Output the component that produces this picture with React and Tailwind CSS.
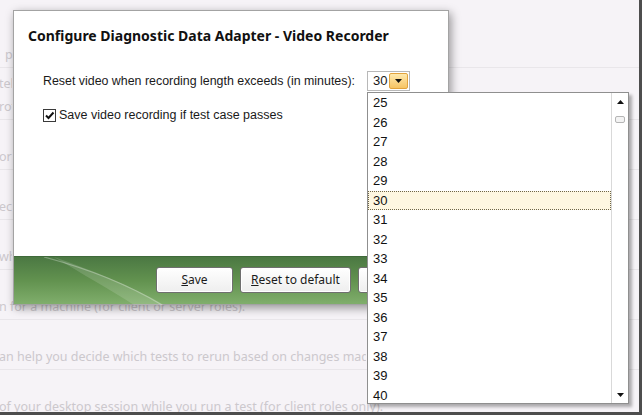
import React from 'react';

const pageRows = [
  { height: 'h-[68px]', lines: ['p'], indent: 'ml-[5px]', clip: 'max-w-[12px]' },
  { height: 'h-[52px]', lines: ['tel', 'rot'], indent: 'ml-[-1px]', clip: 'max-w-[13px]' },
  { height: 'h-[50px]', lines: ['or c'], indent: 'ml-[-1px]', clip: 'max-w-[13px]' },
  { height: 'h-[50px]', lines: ['eci'], indent: 'ml-[-1px]', clip: 'max-w-[13px]' },
  { height: 'h-[50px]', lines: ['wh'], indent: 'ml-[-1px]', clip: 'max-w-[13px]' },
  { height: 'h-[50px]', lines: ['n for a machine (for client or server roles).'], indent: 'ml-[-1px]', clip: '' },
  { height: 'h-[50px]', lines: ['an help you decide which tests to rerun based on changes made t'], indent: 'ml-[-1px]', clip: 'max-w-[367px]' },
  { height: 'h-[50px]', lines: ['of your desktop session while you run a test (for client roles only).'], indent: 'ml-[-1px]', clip: '' },
];

const minutes = Array.from({ length: 16 }, (_, i) => 25 + i);

function Arrow({ up }) {
  return (
    <svg width="7" height="4" viewBox="0 0 7 4">
      <path d={up ? 'M0 4 L3.5 0 L7 4 Z' : 'M0 0 L7 0 L3.5 4 Z'} fill="#111" />
    </svg>
  );
}

function DialogButton({ children, className = '' }) {
  return (
    <button className={`h-[26px] rounded-[3px] border border-[#6f6f6f] bg-gradient-to-b from-white to-[#eeeeee] text-[12px] text-[#1b1b1b] shadow-[inset_0_0_0_1px_#ffffff] ${className}`}>
      {children}
    </button>
  );
}

export default function App() {
  return (
    <div className="w-[644px] h-[417px] bg-white overflow-hidden">
      <div className="relative w-[642px] h-[415px] bg-[#f6f3f7] border-r-[3px] border-b-[3px] border-[#4d4d4d] overflow-hidden font-['Noto_Sans',sans-serif]">
        {/* Faded settings page behind the dialog */}
        <div className="flex flex-col text-[12.5px] text-[#ccc8cd] whitespace-nowrap">
          {pageRows.map((row, i) => (
            <div key={i} className={`${row.height} flex flex-col justify-end pb-[4px] border-b border-[#e9e6ea]`}>
              {row.lines.map((line, j) => (
                <div
                  key={j}
                  className={`${row.indent} ${row.clip} overflow-hidden leading-[16px] ${j < row.lines.length - 1 ? 'mb-[7px]' : ''}`}
                >
                  {line}
                </div>
              ))}
            </div>
          ))}
        </div>

        {/* Dialog */}
        <div className="absolute left-[13px] top-[10px] w-[436px] h-[295px] bg-white border border-[#a3a3a3] shadow-[2px_3px_9px_rgba(0,0,0,0.4)] flex flex-col">
          <div className="flex-1 pl-[14px] pt-[15px]">
            <h1 className="text-[14px] leading-[20px] font-bold text-[#111] whitespace-nowrap">
              Configure Diagnostic Data Adapter - Video Recorder
            </h1>
            <div className="mt-[25px] pl-[15px] flex items-center font-['Liberation_Sans',Arial,sans-serif] text-[12.4px] text-[#1a1a1a]">
              <span className="w-[324px] shrink-0 whitespace-nowrap">Reset video when recording length exceeds (in minutes):</span>
              <div className="w-[43px] h-[20px] shrink-0 border border-[#b8b8b8] bg-white flex items-center justify-between text-[13px]">
                <span className="pl-[5px] leading-[16px]">30</span>
                <div className="w-[19px] h-[16px] mr-[1px] rounded-[2px] border border-[#e2a33d] bg-gradient-to-b from-[#fee9ad] to-[#f7c462] flex items-center justify-center">
                  <Arrow />
                </div>
              </div>
            </div>
            <div className="mt-[16px] pl-[15px] flex items-center gap-[3px] font-['Liberation_Sans',Arial,sans-serif] text-[12.5px] text-[#1a1a1a]">
              <div className="w-[13px] h-[13px] border border-[#3a3a3a] bg-white flex items-center justify-center">
                <svg width="11" height="11" viewBox="0 0 11 11">
                  <path d="M2 5.5 L4.5 8 L9.5 2.5" fill="none" stroke="#111" strokeWidth="2" />
                </svg>
              </div>
              <span className="leading-[16px] whitespace-nowrap">Save video recording if test case passes</span>
            </div>
          </div>

          {/* Green footer */}
          <div className="relative h-[48px] bg-gradient-to-b from-[#4b7843] via-[#62924f] to-[#80ae6c] border-t border-[#3f6a3a]">
            <svg className="absolute inset-0" width="434" height="48" viewBox="0 0 434 48">
              <path d="M40 0 C80 14 120 30 150 48 L120 48 C95 32 70 18 40 0 Z" fill="#ffffff" opacity="0.14" />
              <path d="M30 0 C75 12 118 30 148 48" fill="none" stroke="#ffffff" strokeWidth="1.2" opacity="0.3" />
            </svg>
            <div className="relative flex justify-end gap-[7px] pt-[10px] pr-[13px]">
              <DialogButton className="w-[77px]">
                <span className="underline">S</span>ave
              </DialogButton>
              <DialogButton className="w-[111px]">
                <span className="underline">R</span>eset to default
              </DialogButton>
              <DialogButton className="w-[77px]">Cancel</DialogButton>
            </div>
          </div>
        </div>

        {/* Open dropdown list */}
        <div className="absolute left-[367px] top-[92px] w-[262px] h-[312px] border border-[#8f8f8f] bg-white shadow-[3px_3px_3px_rgba(0,0,0,0.3)] flex font-['Liberation_Sans',Arial,sans-serif] text-[13px] text-[#111]">
          <div className="w-[243px] flex flex-col">
            {minutes.map((m) => (
              <div
                key={m}
                className={`h-[19.6px] pl-[5px] flex items-center ${m === 30 ? 'bg-[#fef7e1] outline-1 outline-dotted outline-[#6e6548] -outline-offset-1' : ''}`}
              >
                {m}
              </div>
            ))}
          </div>
          <div className="flex-1 border-l border-[#d9d9d9] flex flex-col items-center">
            <div className="mt-[7px]">
              <Arrow up />
            </div>
            <div className="mt-[12px] w-[10px] h-[7px] rounded-[2px] border border-[#b5b5b5] bg-[#f3f3f3]" />
            <div className="flex-1" />
            <div className="mb-[6px]">
              <Arrow />
            </div>
          </div>
        </div>
      </div>
    </div>
  );
}
